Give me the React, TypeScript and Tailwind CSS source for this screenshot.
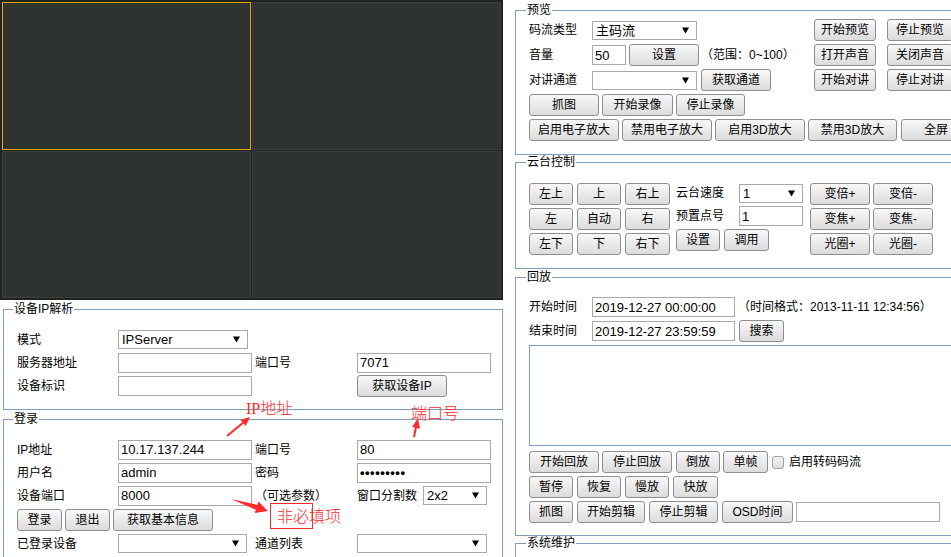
import React from 'react';

const Btn = ({ className = '', children }: { className?: string; children: React.ReactNode }) => (
  <div
    className={`flex h-[22px] shrink-0 items-center justify-center rounded-[3px] border border-[#8e8e8e] bg-linear-to-b from-[#f8f8f8] to-[#dcdcdc] text-[12px] leading-none text-black ${className}`}
  >
    {children}
  </div>
);

const Field = ({ className = '', children }: { className?: string; children?: React.ReactNode }) => (
  <div
    className={`flex h-[20px] shrink-0 items-center border border-[#a9a9a9] bg-white px-[2px] text-[13px] leading-none text-black ${className}`}
  >
    {children}
  </div>
);

const Select = ({ className = '', value = '' }: { className?: string; value?: string }) => (
  <div
    className={`flex h-[19px] shrink-0 items-center justify-between border border-[#a9a9a9] bg-white pl-[3px] pr-[7px] text-[13px] leading-none text-black ${className}`}
  >
    <span>{value}</span>
    <svg width="7" height="7" viewBox="0 0 7 7" aria-hidden="true">
      <path d="M0 0.5h7L3.5 6.5z" fill="#000" />
    </svg>
  </div>
);

const Group = ({
  title,
  className = '',
  legendClass = 'ml-[10px]',
  children,
}: {
  title: string;
  className?: string;
  legendClass?: string;
  children?: React.ReactNode;
}) => (
  <fieldset className={`min-w-0 shrink-0 border border-[#7f9db9] ${className}`}>
    <legend className={`px-[1px] text-[12px] leading-[14px] ${legendClass}`}>{title}</legend>
    {children}
  </fieldset>
);

export default function App() {
  return (
    <div className="relative flex h-[557px] w-[951px] items-start overflow-hidden bg-white font-['Liberation_Sans','Noto_Sans_CJK_SC',sans-serif] text-[12px] text-black">
      {/* left column */}
      <div className="flex w-[503px] shrink-0 flex-col">
        {/* video wall */}
        <div className="grid h-[300px] shrink-0 grid-cols-2 grid-rows-2 gap-[1px] bg-[#1f2320] p-[2px]">
          <div className="border border-[#e8a50f] bg-[#2f332f]" />
          <div className="border border-[#3b3f3c] bg-[#2f332f]" />
          <div className="border border-[#3b3f3c] bg-[#2f332f]" />
          <div className="border border-[#3b3f3c] bg-[#2f332f]" />
        </div>

        {/* 设备IP解析 */}
        <Group title="设备IP解析" className="ml-[3px] mt-[2px] w-[500px] pb-[12px]" legendClass="ml-[9px]">
          <div className="grid auto-rows-[23px] grid-cols-[101px_137px_102px_134px] items-center pl-[13px] pt-[12px]">
            <span>模式</span>
            <Select className="w-[130px]" value="IPServer" />
            <span />
            <span />
            <span>服务器地址</span>
            <Field className="w-[134px]" />
            <span>端口号</span>
            <Field className="w-[134px]">7071</Field>
            <span>设备标识</span>
            <Field className="w-[134px]" />
            <span />
            <Btn className="w-[90px]">获取设备IP</Btn>
          </div>
        </Group>

        {/* 登录 */}
        <Group title="登录" className="ml-[3px] mt-[2px] w-[500px] pb-[12px]" legendClass="ml-[9px]">
          <div className="flex flex-col pl-[13px] pt-[12px]">
            <div className="grid auto-rows-[23px] grid-cols-[101px_137px_102px_134px] items-center">
              <span>IP地址</span>
              <Field className="w-[134px]">10.17.137.244</Field>
              <span>端口号</span>
              <Field className="w-[134px]">80</Field>
              <span>用户名</span>
              <Field className="w-[134px]">admin</Field>
              <span>密码</span>
              <Field className="w-[134px] text-[11px] font-bold tracking-[0.5px]">•••••••••</Field>
              <span>设备端口</span>
              <Field className="w-[134px]">8000</Field>
              <span>（可选参数）</span>
              <div className="flex items-center">
                <span className="w-[66px]">窗口分割数</span>
                <Select className="w-[64px]" value="2x2" />
              </div>
            </div>
            <div className="flex h-[25px] items-center gap-[3px]">
              <Btn className="w-[45px]">登录</Btn>
              <Btn className="w-[45px]">退出</Btn>
              <Btn className="w-[100px]">获取基本信息</Btn>
            </div>
            <div className="grid auto-rows-[23px] grid-cols-[101px_137px_102px_134px] items-center">
              <span>已登录设备</span>
              <Select className="w-[129px]" value="" />
              <span>通道列表</span>
              <Select className="w-[130px]" value="" />
            </div>
          </div>
        </Group>
      </div>

      {/* right column */}
      <div className="ml-[12px] flex w-[470px] shrink-0 flex-col">
        {/* 预览 */}
        <Group title="预览" className="mt-[3px] pb-[13px]">
          <div className="flex flex-col gap-[3px] pl-[13px] pt-[2px]">
            <div className="flex h-[22px] items-center">
              <span className="w-[63px]">码流类型</span>
              <div className="w-[222px]">
                <Select className="w-[105px]" value="主码流" />
              </div>
              <Btn className="w-[62px]">开始预览</Btn>
              <Btn className="ml-[11px] w-[66px]">停止预览</Btn>
            </div>
            <div className="flex h-[22px] items-center">
              <span className="w-[63px]">音量</span>
              <div className="flex w-[222px] items-center">
                <Field className="w-[34px]">50</Field>
                <Btn className="ml-[3px] w-[70px]">设置</Btn>
                <span className="ml-[2px]">（范围：0~100）</span>
              </div>
              <Btn className="w-[62px]">打开声音</Btn>
              <Btn className="ml-[11px] w-[66px]">关闭声音</Btn>
            </div>
            <div className="flex h-[22px] items-center">
              <span className="w-[63px]">对讲通道</span>
              <div className="flex w-[222px] items-center">
                <Select className="w-[105px]" value="" />
                <Btn className="ml-[4px] w-[70px]">获取通道</Btn>
              </div>
              <Btn className="w-[62px]">开始对讲</Btn>
              <Btn className="ml-[11px] w-[66px]">停止对讲</Btn>
            </div>
            <div className="flex h-[22px] items-center gap-[3px]">
              <Btn className="w-[70px]">抓图</Btn>
              <Btn className="w-[71px]">开始录像</Btn>
              <Btn className="w-[69px]">停止录像</Btn>
            </div>
            <div className="flex h-[22px] items-center gap-[3px]">
              <Btn className="w-[90px]">启用电子放大</Btn>
              <Btn className="w-[90px]">禁用电子放大</Btn>
              <Btn className="w-[90px]">启用3D放大</Btn>
              <Btn className="w-[89px]">禁用3D放大</Btn>
              <Btn className="ml-[1px] w-[70px]">全屏</Btn>
            </div>
          </div>
        </Group>

        {/* 云台控制 */}
        <Group title="云台控制" className="pb-[13px]">
          <div className="flex items-start pl-[13px] pt-[14px]">
            <div className="grid grid-cols-[44px_44px_45px] gap-x-[4px] gap-y-[3px]">
              {['左上', '上', '右上', '左', '自动', '右', '左下', '下', '右下'].map((t) => (
                <Btn key={t}>{t}</Btn>
              ))}
            </div>
            <div className="ml-[6px] flex flex-col gap-[3px]">
              <div className="flex h-[20px] items-center">
                <span className="w-[63px]">云台速度</span>
                <Select className="w-[64px]" value="1" />
              </div>
              <div className="flex h-[20px] items-center">
                <span className="w-[63px]">预置点号</span>
                <Field className="w-[64px]">1</Field>
              </div>
              <div className="flex items-center gap-[4px]">
                <Btn className="w-[44px]">设置</Btn>
                <Btn className="w-[45px]">调用</Btn>
              </div>
            </div>
            <div className="ml-[7px] grid grid-cols-[60px_60px] gap-x-[3px] gap-y-[3px]">
              {['变倍+', '变倍-', '变焦+', '变焦-', '光圈+', '光圈-'].map((t) => (
                <Btn key={t}>{t}</Btn>
              ))}
            </div>
          </div>
        </Group>

        {/* 回放 */}
        <Group title="回放" className="mt-[1px] pb-[12px]">
          <div className="flex flex-col pl-[13px] pt-[13px]">
            <div className="flex h-[20px] items-center">
              <span className="w-[63px]">开始时间</span>
              <Field className="w-[143px]">2019-12-27 00:00:00</Field>
              <span className="ml-[3px]">（时间格式：2013-11-11 12:34:56）</span>
            </div>
            <div className="mt-[3px] flex h-[22px] items-center">
              <span className="w-[63px]">结束时间</span>
              <Field className="w-[143px]">2019-12-27 23:59:59</Field>
              <Btn className="ml-[4px] w-[45px]">搜索</Btn>
            </div>
            <div className="mt-[3px] h-[101px] w-[440px] border border-[#7f9db9] bg-white" />
            <div className="mt-[5px] flex h-[22px] items-center gap-[3px]">
              <Btn className="w-[70px]">开始回放</Btn>
              <Btn className="w-[70px]">停止回放</Btn>
              <Btn className="ml-[1px] w-[44px]">倒放</Btn>
              <Btn className="w-[45px]">单帧</Btn>
              <div className="ml-[1px] h-[13px] w-[12px] rounded-[3px] border border-[#a0a0a0] bg-linear-to-b from-[#f4f4f4] to-[#dedede]" />
              <span className="ml-[2px]">启用转码码流</span>
            </div>
            <div className="mt-[3px] flex h-[22px] items-center gap-[4px]">
              <Btn className="w-[44px]">暂停</Btn>
              <Btn className="w-[44px]">恢复</Btn>
              <Btn className="w-[44px]">慢放</Btn>
              <Btn className="w-[45px]">快放</Btn>
            </div>
            <div className="mt-[3px] flex h-[22px] items-center gap-[4px]">
              <Btn className="w-[44px]">抓图</Btn>
              <Btn className="w-[68px]">开始剪辑</Btn>
              <Btn className="w-[69px]">停止剪辑</Btn>
              <Btn className="w-[71px]">OSD时间</Btn>
              <Field className="-ml-[1px] w-[144px]" />
            </div>
          </div>
        </Group>

        {/* 系统维护 */}
        <Group title="系统维护" className="h-[60px]" />
      </div>

      {/* red annotations */}
      <div className="absolute left-[246px] top-[399px] text-[16px] leading-none text-[#ff2a2a]">
        <span className="font-['Liberation_Serif',serif]">IP</span>
        <span className="font-['Noto_Sans_CJK_SC',sans-serif] font-light">地址</span>
      </div>
      <div className="absolute left-[411px] top-[404px] font-['Noto_Sans_CJK_SC',sans-serif] text-[16px] font-light leading-none text-[#ff2a2a]">
        端口号
      </div>
      <div className="absolute left-[270px] top-[503px] h-[26px] w-[43px] border border-[#ff2a2a]" />
      <div className="absolute left-[277px] top-[507px] font-['Noto_Sans_CJK_SC',sans-serif] text-[16px] font-light leading-none text-[#ff2a2a]">
        非必填项
      </div>
      <svg className="pointer-events-none absolute left-0 top-0" width="951" height="557" aria-hidden="true">
        <line x1="227" y1="436" x2="244" y2="422" stroke="#ff2a2a" strokeWidth="2" />
        <polygon points="250,417 245.7,425.9 240.5,419.7" fill="#ff2a2a" />
        <line x1="414" y1="437" x2="416" y2="427" stroke="#ff2a2a" strokeWidth="2" />
        <polygon points="418,418 419.9,428.7 412.1,426.9" fill="#ff2a2a" />
        <polygon points="231,499 257.4,504.9 258.4,501.6 268,511 254.8,513 255.8,509.7" fill="#ff2a2a" />
      </svg>
    </div>
  );
}
